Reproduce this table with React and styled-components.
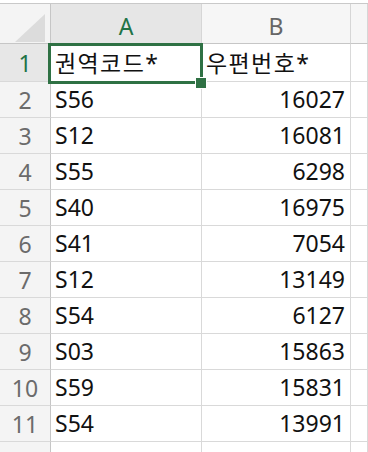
import React from 'react';
import styled, { createGlobalStyle } from 'styled-components';

const GlobalStyle = createGlobalStyle`
  html, body {
    margin: 0;
    padding: 0;
    background: #ffffff;
  }
  body {
    font-family: "Noto Sans", "Noto Sans CJK KR", sans-serif;
  }
`;

const rows = [
  ['S56', '16027'],
  ['S12', '16081'],
  ['S55', '6298'],
  ['S40', '16975'],
  ['S41', '7054'],
  ['S12', '13149'],
  ['S54', '6127'],
  ['S03', '15863'],
  ['S59', '15831'],
  ['S54', '13991'],
];

const Sheet = styled.div`
  margin-top: 3px;
  border-top: 1px solid #c9c9c9;
  display: grid;
  grid-template-columns: 51px 151px 149px 1fr;
  grid-auto-rows: 36px;
  grid-template-rows: 40px 38px;
  width: 368px;
  height: 449px;
  overflow: hidden;
  font-size: 23px;
  color: #111;
`;

const Corner = styled.div`
  box-sizing: border-box;
  background: #f4f4f4;
  border-right: 1px solid #c6c6c6;
  border-bottom: 1px solid #c6c6c6;
  display: flex;
  align-items: flex-end;
  justify-content: flex-end;
  padding: 0 5px 1px 0;
`;

const Triangle = styled.div`
  width: 30px;
  height: 28px;
  background: #dcdcdc;
  clip-path: polygon(100% 0, 100% 100%, 0 100%);
`;

const ColHeader = styled.div`
  box-sizing: border-box;
  background: ${p => (p.$active ? '#e6e6e6' : '#f6f6f6')};
  color: ${p => (p.$active ? '#217346' : '#666')};
  border-right: 1px solid #d6d6d6;
  border-bottom: 1px solid #c6c6c6;
  display: flex;
  align-items: center;
  justify-content: center;
  padding-top: 5px;
`;

const RowHeader = styled.div`
  box-sizing: border-box;
  background: ${p => (p.$active ? '#e7e7e7' : '#f4f4f4')};
  color: ${p => (p.$active ? '#217346' : '#6b6b6b')};
  border-right: 1px solid #c6c6c6;
  border-bottom: 1px solid #d9d9d9;
  display: flex;
  align-items: center;
  justify-content: center;
`;

const Cell = styled.div`
  position: relative;
  box-sizing: border-box;
  background: #fff;
  border-right: 1px solid #d9d9d9;
  border-bottom: 1px solid #d9d9d9;
  display: flex;
  align-items: center;
  justify-content: ${p => (p.$right ? 'flex-end' : 'flex-start')};
  padding: 0 5px 2px 4px;
  white-space: nowrap;
  letter-spacing: ${p => (p.$title ? '1.4px' : '0')};
`;

const Selection = styled.div`
  position: absolute;
  z-index: 2;
  left: -3px;
  top: -1px;
  width: 155px;
  height: 41px;
  box-sizing: border-box;
  border: 3px solid #2f7144;
  pointer-events: none;
`;

const Handle = styled.div`
  position: absolute;
  z-index: 3;
  left: 144px;
  top: 33px;
  width: 12px;
  height: 12px;
  box-sizing: border-box;
  background: #2f7144;
  border: 1px solid #fff;
`;

export default function App() {
  return (
    <>
      <GlobalStyle />
      <Sheet>
        <Corner><Triangle /></Corner>
        <ColHeader $active>A</ColHeader>
        <ColHeader>B</ColHeader>
        <ColHeader />

        <RowHeader $active>1</RowHeader>
        <Cell $title>
          권역코드*
          <Selection />
          <Handle />
        </Cell>
        <Cell $title>우편번호*</Cell>
        <Cell />

        {rows.map(([code, zip], i) => (
          <React.Fragment key={i}>
            <RowHeader>{i + 2}</RowHeader>
            <Cell>{code}</Cell>
            <Cell $right>{zip}</Cell>
            <Cell />
          </React.Fragment>
        ))}

        <RowHeader />
        <Cell />
        <Cell />
        <Cell />
      </Sheet>
    </>
  );
}
